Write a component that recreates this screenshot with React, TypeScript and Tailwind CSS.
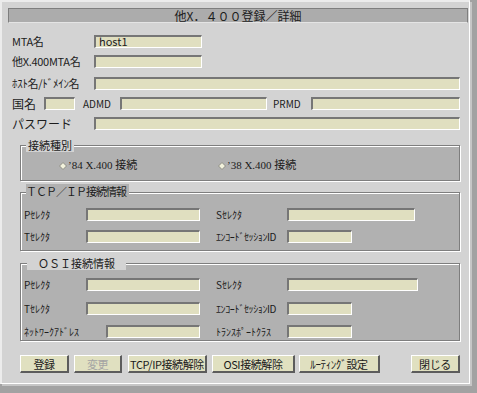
const jp = "font-['Noto_Sans_CJK_JP',sans-serif]";
const serif = "font-['Liberation_Serif','Noto_Sans_CJK_JP',serif]";

function Field({ w, value }: { w: string; value?: string }) {
  return (
    <div
      className={`${w} h-[13px] shrink-0 bg-[#e0dfc0] border-t-2 border-l-2 border-b border-r border-t-[#767676] border-l-[#767676] border-b-white border-r-white pl-[3px] text-[11px] leading-[9px] text-[#202020]`}
    >
      {value}
    </div>
  );
}

function Btn({ w, label, disabled }: { w: string; label: string; disabled?: boolean }) {
  return (
    <button
      className={`${w} h-[18px] shrink-0 bg-[#e0e0c0] border-t border-l border-b-2 border-r-2 border-t-white border-l-white border-b-[#5c5c5c] border-r-[#5c5c5c] text-[11px] leading-[14px] tracking-[-0.4px] whitespace-nowrap ${disabled ? "text-[#a4a4a4]" : "text-[#1a1a1a]"}`}
    >
      {label}
    </button>
  );
}

function Diamond() {
  return (
    <svg width="8" height="8" viewBox="0 0 8 8" className="shrink-0">
      <polygon points="4,0.5 7.5,4 4,7.5 0.5,4" fill="#f2f2dc" stroke="#8c8c84" strokeWidth="1" />
    </svg>
  );
}

const topRows = [
  { label: "MTA名", w: "w-[108px]", value: "host1", mt: "mt-[12px]" },
  { label: "他X.400MTA名", w: "w-[108px]", value: "", mt: "mt-[7px]" },
  { label: "ﾎｽﾄ名/ﾄﾞﾒｲﾝ名", w: "w-[366px]", value: "", mt: "mt-[9px]" },
];

export default function App() {
  return (
    <div className={`w-[477px] h-[393px] bg-[#a2a2a2] ${jp} text-[#1c1c1c]`}>
      <div className="w-[470px] h-[384px] bg-[#d3d3d3] border-t-2 border-l-2 border-r border-b border-t-[#ececec] border-l-[#ececec] border-r-white border-b-white shadow-[2px_2px_0_#c6c6c6] flex flex-col">
        {/* title */}
        <div className="ml-[6px] mt-[6px] w-[460px] h-[15px] bg-[#acacac] border-t border-l border-r border-[#7e7e7e] border-b border-b-[#e4e4e4] flex items-center justify-center text-[12px] leading-[13px]">
          他X．４００登録／詳細
        </div>

        {/* basic fields */}
        <div className="pl-[10px] flex flex-col">
          {topRows.map((r) => (
            <div key={r.label} className={`${r.mt} h-[13px] flex items-center`}>
              <span className="w-[82px] text-[11px] leading-[13px] whitespace-nowrap tracking-[-0.3px]">{r.label}</span>
              <Field w={r.w} value={r.value} />
            </div>
          ))}
          <div className="mt-[7px] h-[13px] flex items-center">
            <span className="w-[32px] text-[12px] leading-[13px]">国名</span>
            <Field w="w-[31px]" />
            <span className="ml-[8px] w-[37px] text-[10px] leading-[13px]">ADMD</span>
            <Field w="w-[147px]" />
            <span className="ml-[6px] w-[38px] text-[10px] leading-[13px]">PRMD</span>
            <Field w="w-[149px]" />
          </div>
          <div className="mt-[7px] h-[13px] flex items-center">
            <span className="w-[82px] text-[12px] leading-[13px] whitespace-nowrap">パスワード</span>
            <Field w="w-[366px]" />
          </div>
        </div>

        {/* connection type */}
        <fieldset className="mt-[9px] ml-[18px] w-[440px] border border-[#7e7e7e] bg-[#b1b1b1] shadow-[1px_1px_0_#fff,inset_1px_1px_0_#fff] pt-[7px] pb-[8px]">
          <legend className="ml-[5px] px-[2px] bg-[#d3d3d3] text-[11px] leading-[13px]">接続種別</legend>
          <div className="h-[13px] flex items-center">
            <div className="ml-[38px] w-[159px] flex items-center gap-[1px]">
              <Diamond />
              <span className={`${serif} text-[11px] leading-[13px] whitespace-nowrap`}>’84 X.400 接続</span>
            </div>
            <div className="flex items-center gap-[1px]">
              <Diamond />
              <span className={`${serif} text-[11px] leading-[13px] whitespace-nowrap`}>’38 X.400 接続</span>
            </div>
          </div>
        </fieldset>

        {/* TCP/IP */}
        <fieldset className="mt-[3px] ml-[18px] w-[440px] border border-[#7e7e7e] bg-[#b1b1b1] shadow-[1px_1px_0_#fff,inset_1px_1px_0_#fff] pt-[8px] pb-[7px] pl-[3px]">
          <legend className="ml-[2px] pr-[3px] bg-[#b1b1b1] text-[11px] leading-[16px] tracking-[-1px] font-['Liberation_Serif','Noto_Sans_CJK_JP',serif]">ＴＣＰ／ＩＰ接続情報</legend>
          <div className="h-[13px] flex items-center">
            <span className="w-[62px] text-[10px] leading-[13px]">Pｾﾚｸﾀ</span>
            <Field w="w-[114px]" />
            <span className="ml-[16px] w-[71px] text-[10px] leading-[13px]">Sｾﾚｸﾀ</span>
            <Field w="w-[128px]" />
          </div>
          <div className="mt-[9px] h-[13px] flex items-center">
            <span className="w-[62px] text-[10px] leading-[13px]">Tｾﾚｸﾀ</span>
            <Field w="w-[114px]" />
            <span className="ml-[16px] w-[71px] text-[10px] leading-[13px] whitespace-nowrap tracking-[-0.4px]">ｴﾝｺｰﾄﾞｾｯｼｮﾝID</span>
            <Field w="w-[65px]" />
          </div>
        </fieldset>

        {/* OSI */}
        <fieldset className="mt-[5px] ml-[18px] w-[440px] border border-[#7e7e7e] bg-[#b1b1b1] shadow-[1px_1px_0_#fff,inset_1px_1px_0_#fff] pt-[8px] pb-[2px] pl-[3px]">
          <legend className="ml-[3px] px-[11px] bg-[#d3d3d3] text-[11px] leading-[14px]">ＯＳＩ接続情報</legend>
          <div className="h-[13px] flex items-center">
            <span className="w-[62px] text-[10px] leading-[13px]">Pｾﾚｸﾀ</span>
            <Field w="w-[114px]" />
            <span className="ml-[16px] w-[71px] text-[10px] leading-[13px]">Sｾﾚｸﾀ</span>
            <Field w="w-[131px]" />
          </div>
          <div className="mt-[11px] h-[13px] flex items-center">
            <span className="w-[62px] text-[10px] leading-[13px]">Tｾﾚｸﾀ</span>
            <Field w="w-[114px]" />
            <span className="ml-[16px] w-[71px] text-[10px] leading-[13px] whitespace-nowrap tracking-[-0.4px]">ｴﾝｺｰﾄﾞｾｯｼｮﾝID</span>
            <Field w="w-[65px]" />
          </div>
          <div className="mt-[10px] h-[13px] flex items-center">
            <span className="w-[82px] text-[10px] leading-[13px] whitespace-nowrap">ﾈｯﾄﾜｰｸｱﾄﾞﾚｽ</span>
            <Field w="w-[94px]" />
            <span className="ml-[16px] w-[71px] text-[10px] leading-[13px] whitespace-nowrap">ﾄﾗﾝｽﾎﾟｰﾄｸﾗｽ</span>
            <Field w="w-[65px]" />
          </div>
        </fieldset>

        {/* buttons */}
        <div className="mt-[14px] ml-[18px] w-[440px] flex items-center">
          <Btn w="w-[49px]" label="登録" />
          <Btn w="w-[48px] ml-[5px]" label="変更" disabled />
          <Btn w="w-[79px] ml-[6px]" label="TCP/IP接続解除" />
          <Btn w="w-[83px] ml-[5px]" label="OSI接続解除" />
          <Btn w="w-[81px] ml-[4px]" label="ﾙｰﾃｨﾝｸﾞ設定" />
          <Btn w="w-[49px] ml-auto" label="閉じる" />
        </div>
      </div>
    </div>
  );
}
